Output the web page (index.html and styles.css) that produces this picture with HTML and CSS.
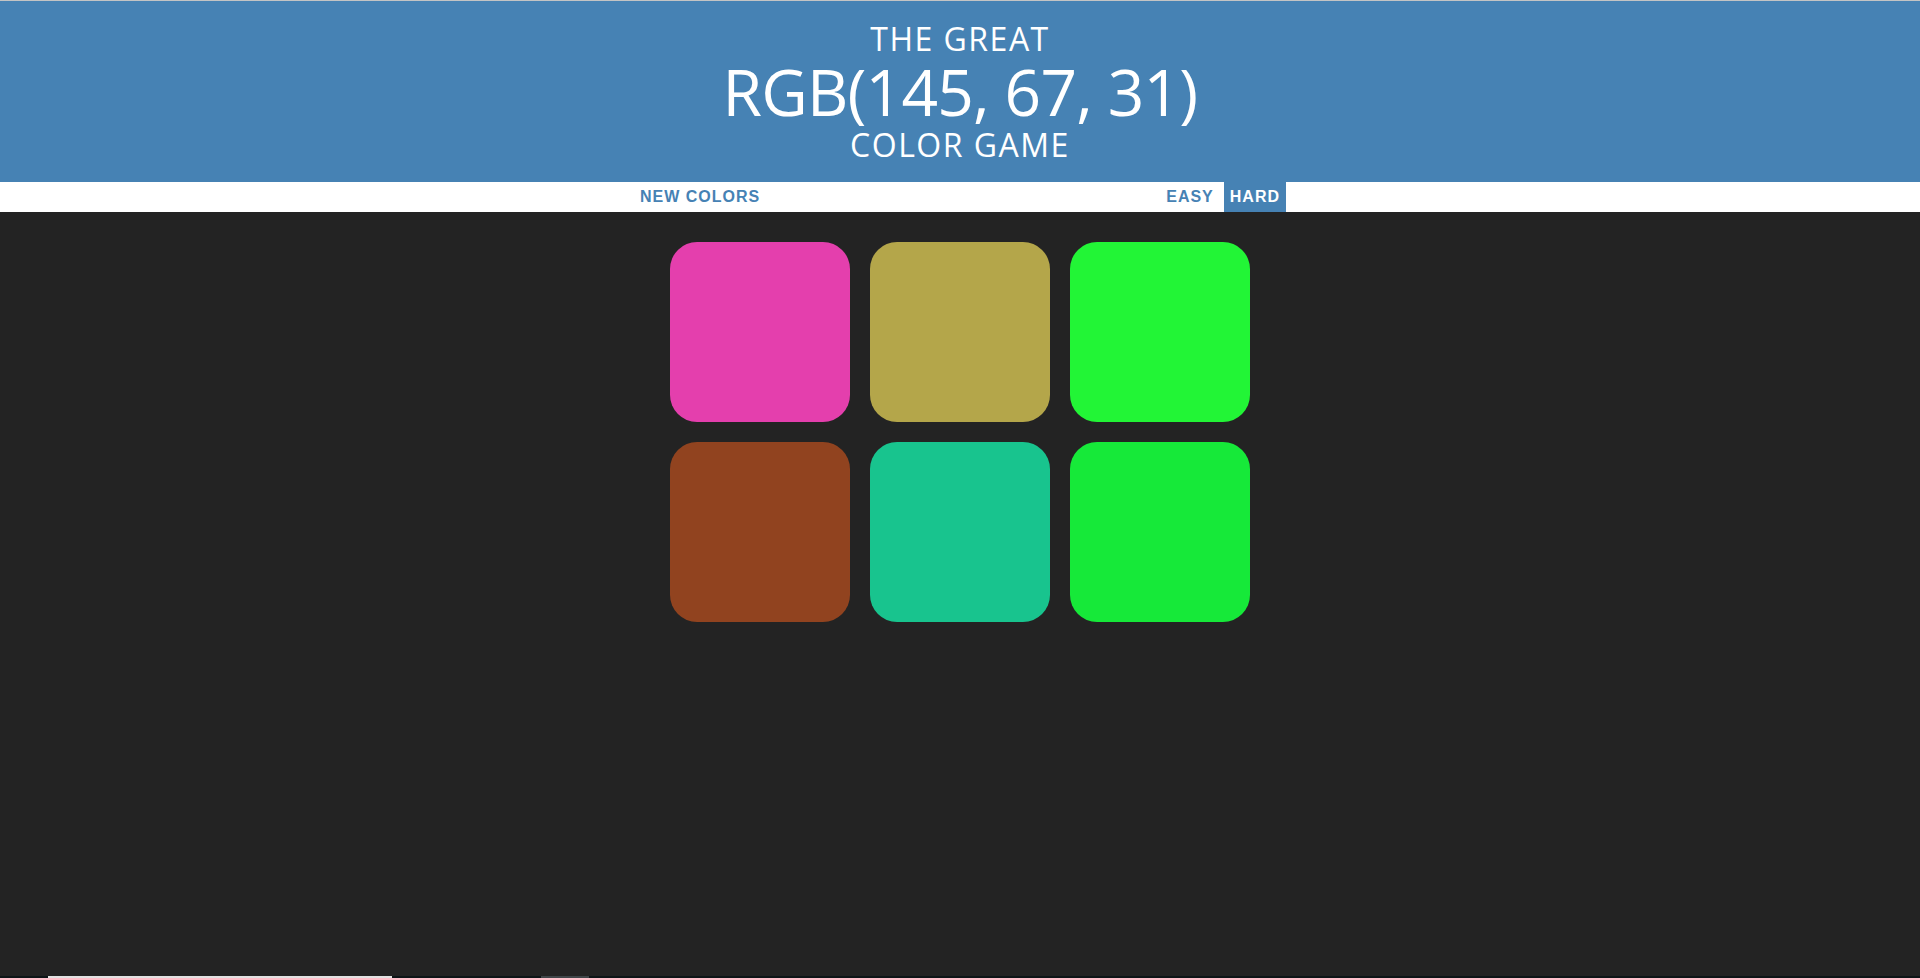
FILE: index.html
```
<!DOCTYPE html>
<html lang="en">
<head>
<meta charset="utf-8">
<title>Color Game</title>
<link rel="stylesheet" href="styles.css">
</head>
<body>
<div class="page">
  <h1 class="title">
    <div class="title-line">The Great</div>
    <div class="title-rgb">RGB(145, 67, 31)</div>
    <div class="title-line">Color Game</div>
  </h1>
  <div class="stripe">
    <button class="btn reset">New Colors</button>
    <span class="message"></span>
    <button class="btn mode">Easy</button>
    <button class="btn mode selected">Hard</button>
  </div>
  <main class="board">
    <div class="grid">
      <div class="square sq1"></div>
      <div class="square sq2"></div>
      <div class="square sq3"></div>
      <div class="square sq4"></div>
      <div class="square sq5"></div>
      <div class="square sq6"></div>
    </div>
  </main>
  <div class="bottom-strip">
    <span class="strip-light"></span>
    <span class="strip-gray"></span>
  </div>
</div>
</body>
</html>
```
FILE: styles.css
```
html, body {
  margin: 0;
  padding: 0;
  height: 100%;
}
body {
  background: #232323;
  font-family: "Liberation Sans", Arial, sans-serif;
}
.page {
  display: flex;
  flex-direction: column;
  min-height: 100vh;
  border-top: 1px solid #c4c4c4;
  box-sizing: border-box;
}
.title {
  margin: 0;
  padding: 20px 0;
  background: #4682b4;
  color: #ffffff;
  text-align: center;
  text-transform: uppercase;
  font-family: "Open Sans", sans-serif;
  font-weight: 400;
  font-size: 32px;
}
.title-line {
  line-height: 35px;
  letter-spacing: 1.5px;
}
.title-rgb {
  font-size: 64px;
  line-height: 71px;
  letter-spacing: -0.8px;
}
.stripe {
  display: flex;
  justify-content: center;
  align-items: stretch;
  gap: 4px;
  height: 30px;
  background: #ffffff;
}
.btn {
  border: none;
  background: none;
  margin: 0;
  padding: 0 6px;
  height: 100%;
  font-family: "Liberation Sans", Arial, sans-serif;
  font-size: 16px;
  font-weight: 700;
  letter-spacing: 1px;
  text-transform: uppercase;
  color: #4682b4;
  cursor: pointer;
}
.message {
  width: 384px;
  flex: none;
  margin: 0 1px;
}
.mode.selected {
  color: #ffffff;
  background: #4682b4;
}
.board {
  flex: 1;
}
.grid {
  max-width: 600px;
  margin: 20px auto;
  display: flex;
  flex-wrap: wrap;
}
.square {
  width: 180px;
  height: 180px;
  margin: 10px;
  border-radius: 27px;
}
.sq1 { background: #e43fad; }
.sq2 { background: #b4a64a; }
.sq3 { background: #22f536; }
.sq4 { background: rgb(145, 67, 31); }
.sq5 { background: #18c48e; }
.sq6 { background: #16e939; }
.bottom-strip {
  height: 2px;
  background: #0d1517;
  display: flex;
}
.strip-light {
  margin-left: 48px;
  width: 344px;
  background: #e2e2e2;
}
.strip-gray {
  margin-left: 149px;
  width: 48px;
  background: #3f4548;
}
```
